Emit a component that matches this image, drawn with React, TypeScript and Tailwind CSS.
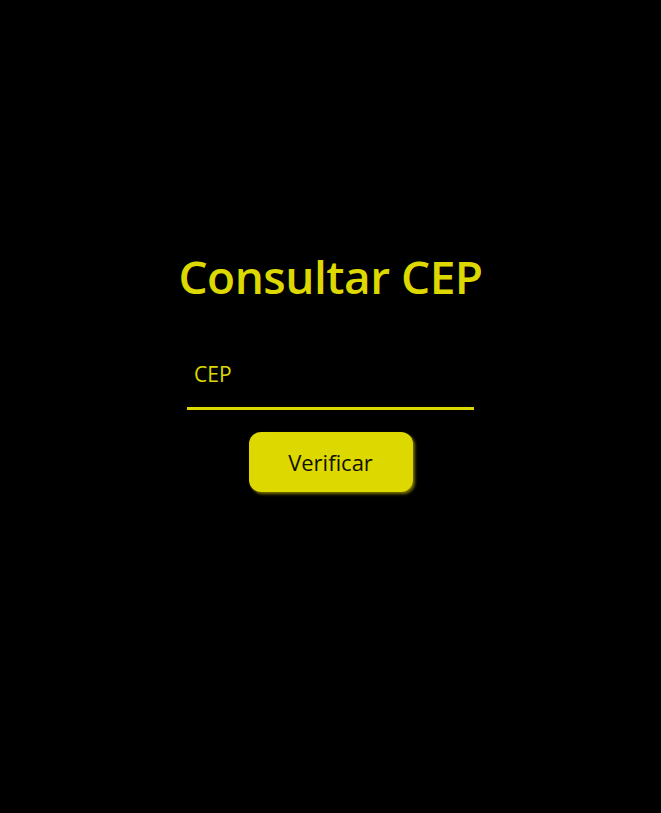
import React, { useState } from 'react';

const App = () => {
  const [cep, setCep] = useState('');

  return (
    <div
      className="flex flex-col items-center w-full min-h-screen bg-black pt-[253px]"
      style={{ fontFamily: '"Open Sans", "Noto Sans", sans-serif' }}
    >
      <h1 className="text-[46px] font-semibold text-[#dcd800] leading-none tracking-[-0.5px] mb-[50px]">
        Consultar CEP
      </h1>
      <input
        type="text"
        value={cep}
        onChange={(e) => setCep(e.target.value)}
        placeholder="CEP"
        className="w-[287px] h-[61px] px-[7px] pb-[8px] bg-transparent border-b-[3px] border-[#dcd800] text-[21px] text-[#dcd800] placeholder:text-[#dcd800] outline-none"
      />
      <button className="mt-[22px] w-[164px] h-[60px] rounded-[12px] bg-[#dcd800] text-[22px] text-[#111100] shadow-[2px_2px_3px_rgba(150,140,0,0.8)]">
        Verificar
      </button>
    </div>
  );
};

export default App;
